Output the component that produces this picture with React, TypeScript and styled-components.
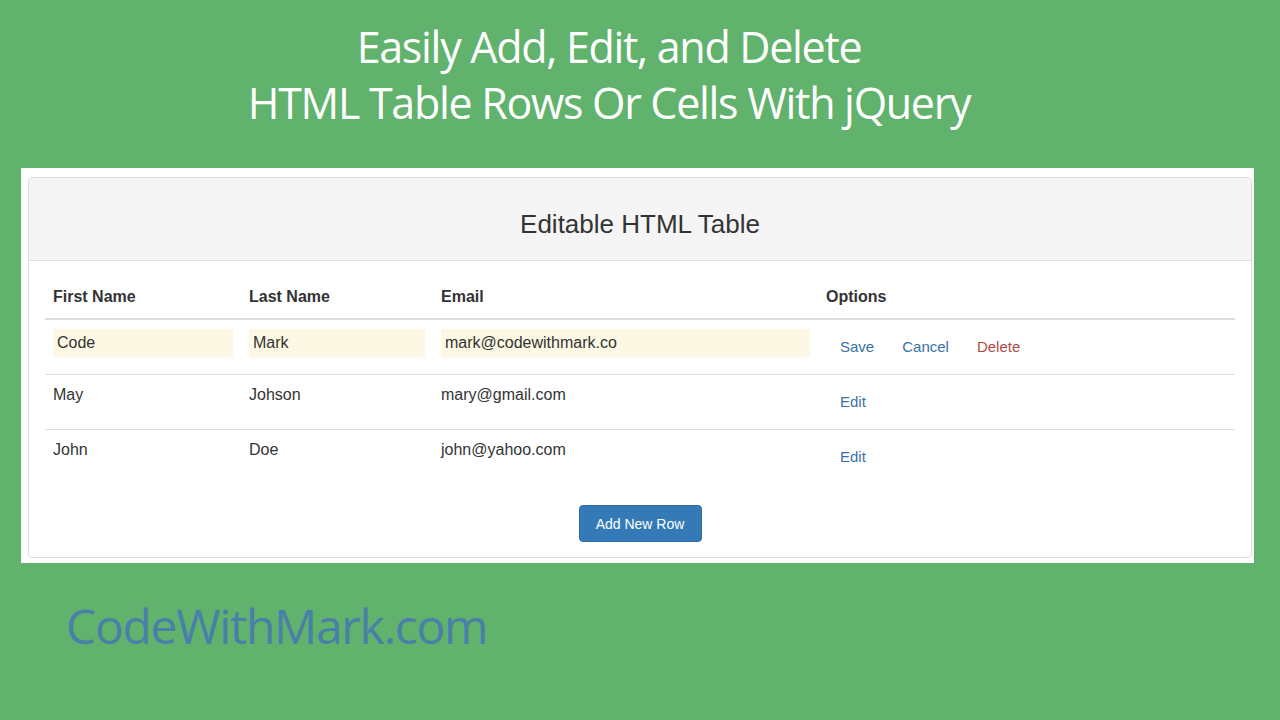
import React from "react";
import styled, { createGlobalStyle } from "styled-components";

const GlobalStyle = createGlobalStyle`
  html, body {
    margin: 0;
    padding: 0;
    background: #60b26c;
  }
  body {
    font-family: "Liberation Sans", Arial, sans-serif;
  }
`;

const Page = styled.div`
  width: 1280px;
  height: 720px;
  background: #60b26c;
  display: flex;
  flex-direction: column;
  overflow: hidden;
`;

const Title = styled.h1`
  margin: 0;
  padding: 19px 62px 0 0;
  height: 168px;
  flex-shrink: 0;
  box-sizing: border-box;
  text-align: center;
  color: #ffffff;
  font-family: "Open Sans", "Noto Sans", sans-serif;
  font-weight: 400;
  font-size: 43px;
  line-height: 56px;
  letter-spacing: -1.3px;
`;

const Sheet = styled.div`
  margin: 0 26px 0 21px;
  background: #ffffff;
  padding: 9px 2px 5px 7px;
  height: 395px;
  flex-shrink: 0;
  box-sizing: border-box;
`;

const Panel = styled.div`
  border: 1px solid #dddddd;
  border-radius: 4px;
  height: 100%;
  box-sizing: border-box;
  display: flex;
  flex-direction: column;
  overflow: hidden;
`;

const PanelHeading = styled.div`
  flex-shrink: 0;
  background: #f5f5f5;
  border-bottom: 1px solid #dddddd;
  height: 83px;
  display: flex;
  align-items: center;
  justify-content: center;
  font-size: 26px;
  color: #333333;
  padding-top: 10px;
  box-sizing: border-box;
`;

const PanelBody = styled.div`
  padding: 15px 16px 16px 16px;
  display: flex;
  flex-direction: column;
`;

const Table = styled.table`
  width: 100%;
  table-layout: fixed;
  border-collapse: collapse;
  font-size: 16px;
  color: #333333;
`;

const HeadCell = styled.th<{ $w?: number }>`
  box-sizing: border-box;
  text-align: left;
  font-weight: bold;
  padding: 12px 8px 12px 8px;
  border-bottom: 2px solid #dddddd;
  line-height: 18px;
  width: ${(p) => (p.$w ? `${p.$w}px` : "auto")};
`;

const Row = styled.tr<{ $last?: boolean }>`
  border-bottom: ${(p) => (p.$last ? "none" : "1px solid #dddddd")};
`;

const Cell = styled.td`
  padding: 9px 8px 16px 8px;
  vertical-align: top;
  line-height: 22px;
  height: 28px;
`;

const EditInput = styled.div`
  background: #fcf8e3;
  height: 28px;
  line-height: 28px;
  padding-left: 4px;
  box-sizing: border-box;
  margin-bottom: -8px;
`;

const Actions = styled.div`
  display: flex;
  padding-top: 7px;
`;

const LinkButton = styled.span<{ $danger?: boolean }>`
  font-size: 15px;
  padding: 0 14px;
  color: ${(p) => (p.$danger ? "#b04a47" : "#3872a8")};
  line-height: 22px;
`;

const Footer = styled.div`
  display: flex;
  justify-content: center;
  padding-top: 21px;
`;

const PrimaryButton = styled.button`
  width: 123px;
  height: 37px;
  background: #337ab7;
  border: 1px solid #2e6da4;
  border-radius: 4px;
  color: #ffffff;
  font-family: "Liberation Sans", Arial, sans-serif;
  font-size: 14px;
  padding: 0;
`;

const Brand = styled.div`
  padding: 35px 0 0 66px;
  color: #4a7fa9;
  font-family: "Open Sans", "Noto Sans", sans-serif;
  font-size: 48px;
  letter-spacing: -1.3px;
  line-height: 56px;
`;

const rows = [
  { first: "May", last: "Johson", email: "mary@gmail.com" },
  { first: "John", last: "Doe", email: "john@yahoo.com" },
];

export default function App() {
  return (
    <Page>
      <GlobalStyle />
      <Title>
        Easily Add, Edit, and Delete
        <br />
        HTML Table Rows Or Cells With jQuery
      </Title>
      <Sheet>
        <Panel>
          <PanelHeading>Editable HTML Table</PanelHeading>
          <PanelBody>
            <Table>
              <thead>
                <tr>
                  <HeadCell $w={196}>First Name</HeadCell>
                  <HeadCell $w={192}>Last Name</HeadCell>
                  <HeadCell $w={385}>Email</HeadCell>
                  <HeadCell>Options</HeadCell>
                </tr>
              </thead>
              <tbody>
                <Row>
                  <Cell>
                    <EditInput>Code</EditInput>
                  </Cell>
                  <Cell>
                    <EditInput>Mark</EditInput>
                  </Cell>
                  <Cell>
                    <EditInput>mark@codewithmark.co</EditInput>
                  </Cell>
                  <Cell>
                    <Actions>
                      <LinkButton>Save</LinkButton>
                      <LinkButton>Cancel</LinkButton>
                      <LinkButton $danger>Delete</LinkButton>
                    </Actions>
                  </Cell>
                </Row>
                {rows.map((r, i) => (
                  <Row key={r.email} $last={i === rows.length - 1}>
                    <Cell>{r.first}</Cell>
                    <Cell>{r.last}</Cell>
                    <Cell>{r.email}</Cell>
                    <Cell>
                      <Actions>
                        <LinkButton>Edit</LinkButton>
                      </Actions>
                    </Cell>
                  </Row>
                ))}
              </tbody>
            </Table>
            <Footer>
              <PrimaryButton>Add New Row</PrimaryButton>
            </Footer>
          </PanelBody>
        </Panel>
      </Sheet>
      <Brand>CodeWithMark.com</Brand>
    </Page>
  );
}
